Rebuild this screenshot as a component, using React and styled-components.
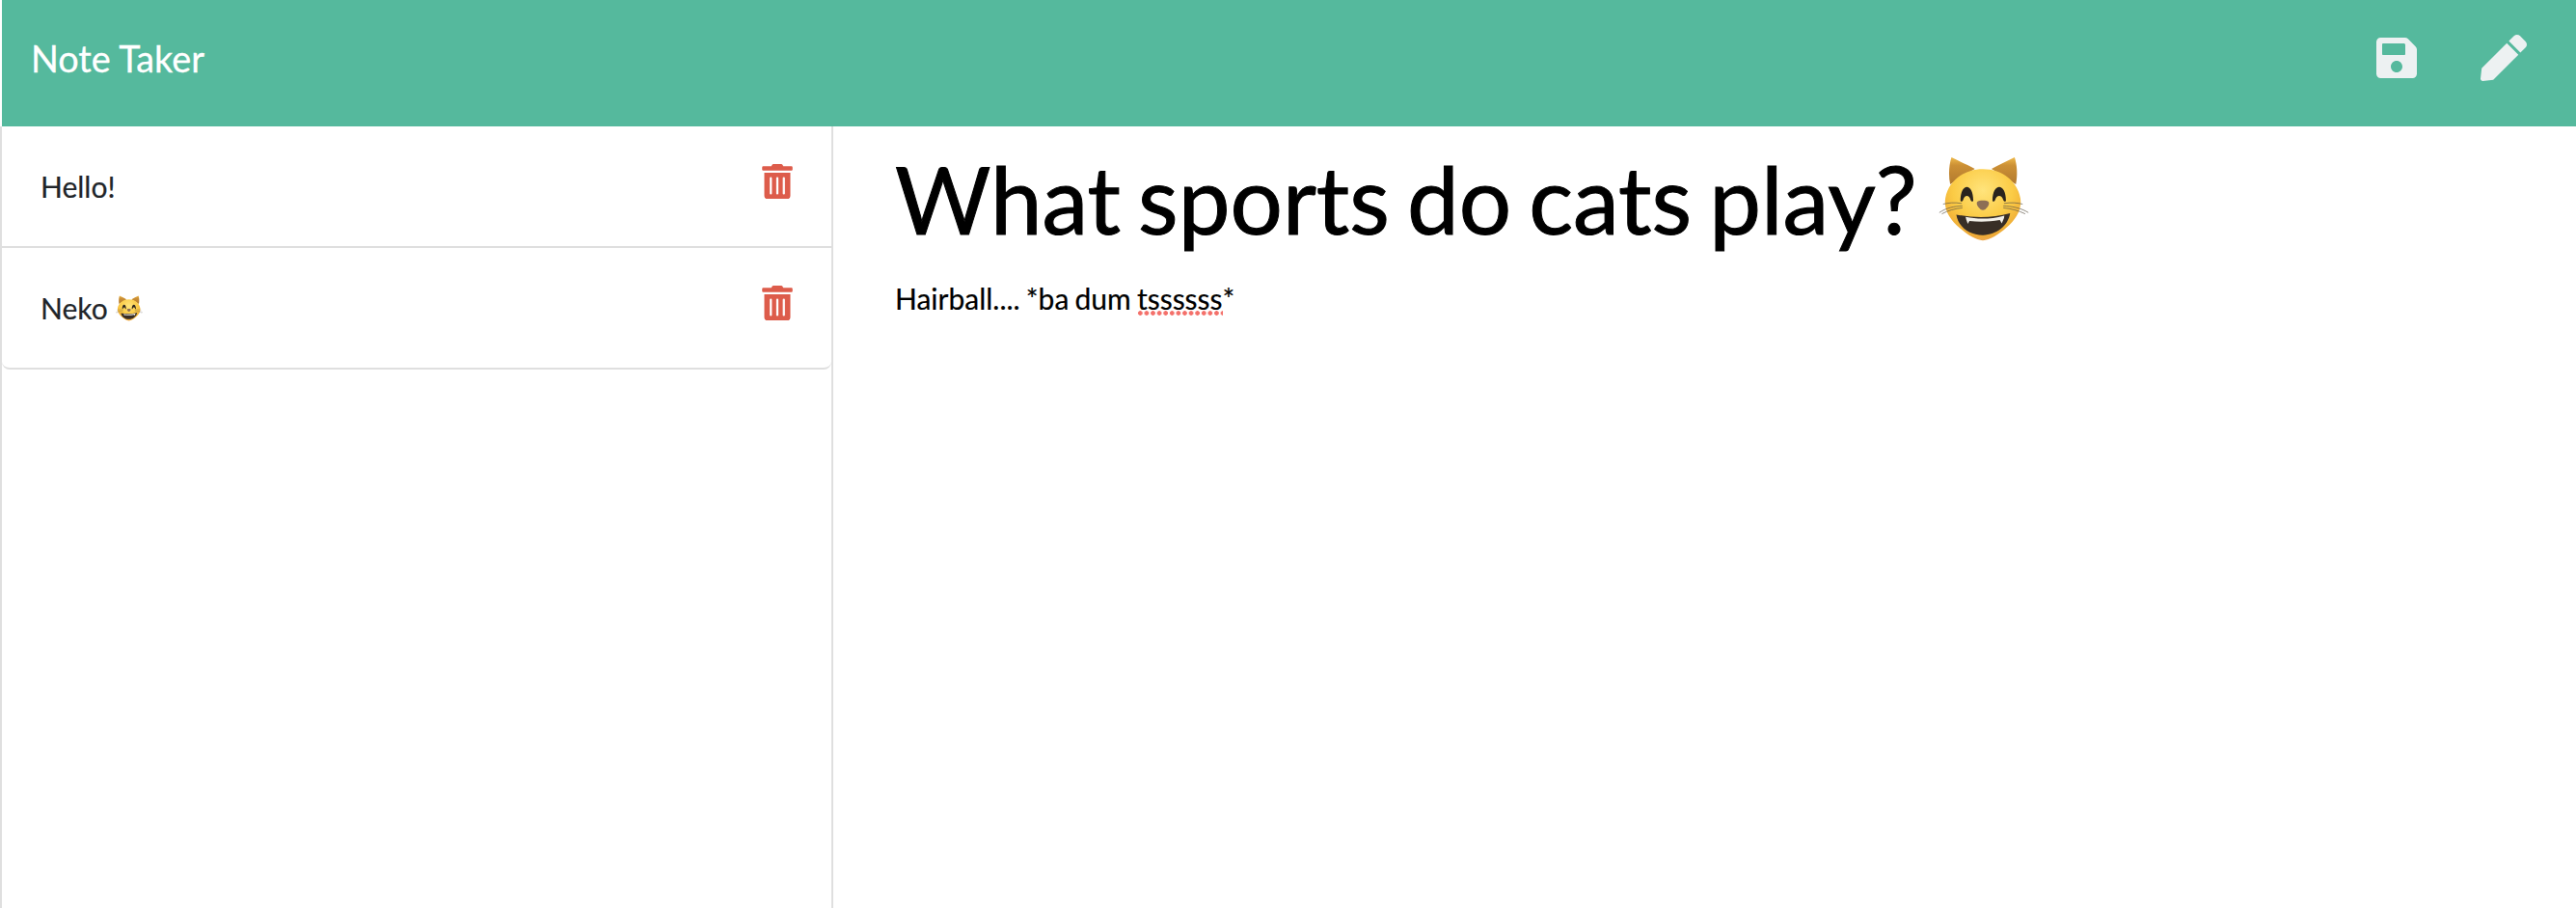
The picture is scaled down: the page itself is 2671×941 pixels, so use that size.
import React from "react";
import styled, { createGlobalStyle } from "styled-components";
import { FaSave, FaPen, FaTrashAlt } from "react-icons/fa";

const Global = createGlobalStyle`
  html, body { margin: 0; padding: 0; background: #fff; }
  body { font-family: Lato, "Noto Sans", sans-serif; overflow: hidden; }
`;
const Page = styled.div`
  width: 2671px; height: 941px; display: flex; flex-direction: column;
`;
const Navbar = styled.header`
  height: 131px; flex: none; margin-left: 2px; background: #55b99d; display: flex; align-items: center;
  justify-content: space-between; padding: 0 51px 12px 30px; box-sizing: border-box;
`;
const Brand = styled.div`
  color: #fff; font-size: 37.8px; line-height: 1; margin-top: 3px; -webkit-text-stroke: 0.3px #fff;
`;
const Actions = styled.div`
  display: flex; align-items: center; gap: 63px; color: #edf1f2;
`;
const Body = styled.div`
  flex: 1; display: flex; min-height: 0;
`;
const Sidebar = styled.aside`
  width: 864px; flex: none; box-sizing: border-box; border-left: 2px solid #dfdfdf; border-right: 2px solid #dfdfdf;
`;
const List = styled.ul`
  list-style: none; margin: 0; padding: 0; border-bottom: 2px solid #dfdfdf;
  border-radius: 0 0 8px 8px;
`;
const Row = styled.li`
  height: 124px; box-sizing: border-box; display: flex; align-items: center; justify-content: space-between;
  padding: 0 38px 0 40px; color: #212529; font-size: 30px; -webkit-text-stroke: 0.2px #212529;
  & + & { border-top: 2px solid #dfdfdf; height: 126px; }
`;
const RowText = styled.span`
  display: inline-flex; align-items: center; gap: 8px;
`;
const Trash = styled(FaTrashAlt)`
  color: #dd5c4b; font-size: 36px; margin-top: -10px;
`;
const Main = styled.main`
  flex: 1; padding: 17px 64px; min-width: 0;
`;
const Heading = styled.h1`
  margin: 0; font-weight: 400; font-size: 96px; line-height: 1.2; color: #000; word-spacing: -6.5px;
  -webkit-text-stroke: 1px #000; display: flex; align-items: center; gap: 22px;
`;
const Note = styled.p`
  margin: 24px 0 0; font-size: 30px; line-height: 1.5; color: #000; word-spacing: -1.5px;
  -webkit-text-stroke: 0.2px #000;
`;
const Typo = styled.span`
  position: relative;
  &::after {
    content: ""; position: absolute; left: 0; right: 0; bottom: 0; height: 5px;
    background: radial-gradient(circle at center, #f4706a 2px, transparent 2.6px) repeat-x;
    background-size: 6.6px 5px;
  }
`;

function CatEmoji({ width, height }) {
  return (
    <svg width={width} height={height} viewBox="100 65 280 265" role="img" aria-label="😸">
      <defs>
        <radialGradient id="catFace" cx="50%" cy="30%" r="72%">
          <stop offset="0%" stopColor="#ffe47c" />
          <stop offset="55%" stopColor="#fbcb45" />
          <stop offset="88%" stopColor="#eeaa35" />
          <stop offset="100%" stopColor="#eda95a" />
        </radialGradient>
        <linearGradient id="catEar" x1="0" y1="0" x2="0" y2="1">
          <stop offset="0%" stopColor="#eeb94a" />
          <stop offset="30%" stopColor="#cc9035" />
          <stop offset="100%" stopColor="#b27a2e" />
        </linearGradient>
      </defs>
      <path d="M139 68 C131 92 129 125 135 152 L212 104 C190 92 162 80 139 68Z" fill="url(#catEar)" />
      <path d="M336 68 C344 92 346 125 340 152 L264 104 C286 92 312 80 336 68Z" fill="url(#catEar)" />
      <path d="M237 105 C300 105 345 145 354 195 C360 232 340 262 310 288 C285 310 258 326 237 328 C216 326 189 310 164 288 C134 262 114 232 120 195 C129 145 174 105 237 105Z" fill="url(#catFace)" />
      <path d="M167 203 C167 146 207 146 207 203 C207 207 201 207 199 202 C194 184 180 184 175 202 C173 207 167 207 167 203Z" fill="#2a241e" />
      <path d="M267 203 C267 146 309 146 309 203 C309 207 303 207 301 202 C296 184 280 184 275 202 C273 207 267 207 267 203Z" fill="#2a241e" />
      <path d="M219 207 C226 201 248 201 255 207 C260 215 246 233 237 233 C228 233 214 215 219 207Z" fill="#8d6f55" />
      <path d="M154 247 C210 258 265 258 322 243 C316 282 280 310 237 311 C194 310 160 285 154 247Z" fill="#382e26" />
      <path d="M183 254 C222 262 260 262 304 250 L303 258 L296 274 L290 264 C255 270 225 270 195 267 L190 276 L185 262Z" fill="#f2efe8" />
      <g stroke="#5d5446" strokeWidth="2" fill="none" strokeLinecap="round">
        <path d="M170 212 C150 208 128 210 114 214" />
        <path d="M172 220 C150 220 122 226 102 240" />
        <path d="M172 226 C150 228 128 234 110 244" />
        <path d="M304 212 C324 208 346 210 360 214" />
        <path d="M302 220 C324 220 356 226 378 240" />
        <path d="M302 226 C324 228 348 234 368 244" />
      </g>
    </svg>
  );
}

const notes = [
  { id: 1, title: "Hello!" },
  { id: 2, title: "Neko", cat: true },
];

export default function App() {
  return (
    <Page>
      <Global />
      <Navbar>
        <Brand>Note Taker</Brand>
        <Actions>
          <FaSave size={48} />
          <FaPen size={48} />
        </Actions>
      </Navbar>
      <Body>
        <Sidebar>
          <List>
            {notes.map((n) => (
              <Row key={n.id}>
                <RowText>
                  {n.title}
                  {n.cat && <CatEmoji width={28} height={27} />}
                </RowText>
                <Trash />
              </Row>
            ))}
          </List>
        </Sidebar>
        <Main>
          <Heading>
            What sports do cats play?
            <CatEmoji width={94} height={88} />
          </Heading>
          <Note>
            Hairball.... *ba dum <Typo>tssssss</Typo>*
          </Note>
        </Main>
      </Body>
    </Page>
  );
}
